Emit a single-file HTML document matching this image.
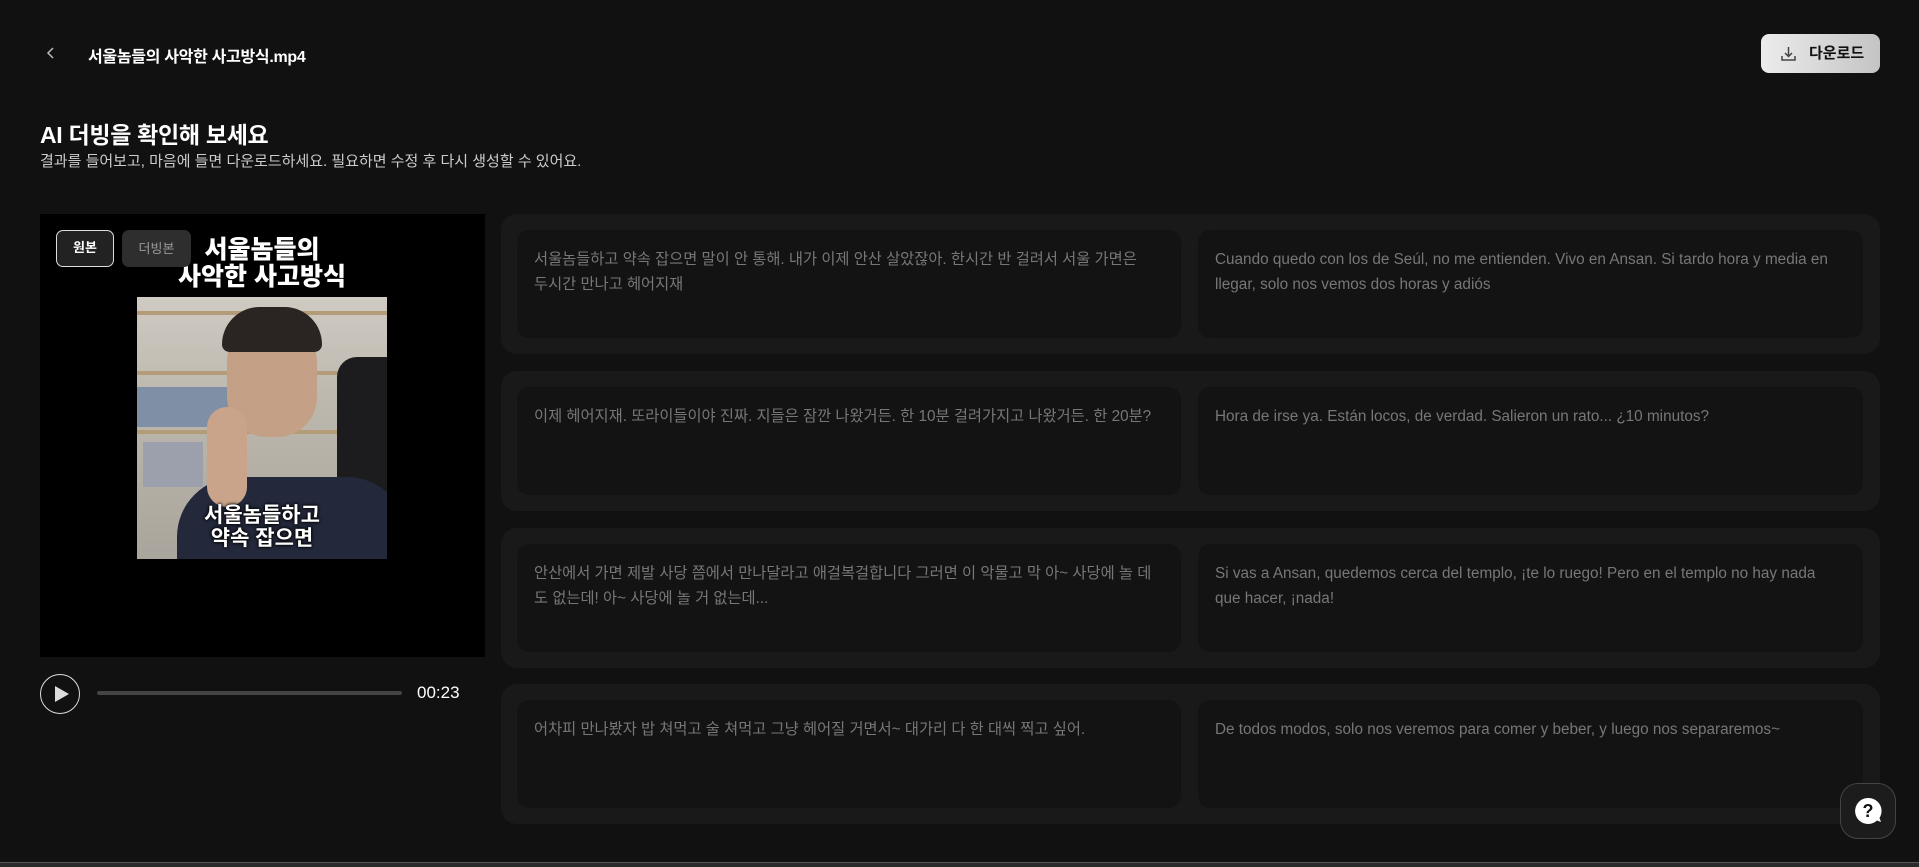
<!DOCTYPE html>
<html><head><meta charset="utf-8"><style>
*{box-sizing:border-box;margin:0;padding:0}
body{width:1919px;height:867px;background:#111;position:relative;overflow:hidden;font-family:"Liberation Sans","Noto Sans CJK KR",sans-serif;color:#fff}
.a{position:absolute}
.row{position:absolute;left:501px;width:1379px;height:140px;background:#191919;border-radius:16px}
.card{position:absolute;top:16px;height:108px;background:#131313;border-radius:12px;padding:18px 28px 18px 17px;font-size:15.3px;line-height:24.5px;color:#777}
.c1{left:16px;width:664px}.c2{left:697px;width:665px}
</style></head><body>
<svg class="a" style="left:45px;top:46px" width="12" height="14" viewBox="0 0 12 14"><path d="M8 2L3 7l5 5" stroke="#bbb" stroke-width="1.5" fill="none"/></svg>
<div class="a" style="left:88px;top:43px;font-size:16px;font-weight:bold;letter-spacing:-0.3px">서울놈들의 사악한 사고방식.mp4</div>
<div class="a" style="left:1761px;top:34px;width:119px;height:39px;border-radius:8px;background:linear-gradient(90deg,#ececec,#c4c4c4);color:#111;font-size:15px;font-weight:bold;line-height:39px;padding-left:48px">다운로드</div>
<svg class="a" style="left:1780px;top:45px" width="17" height="17" viewBox="0 0 17 17"><path d="M8.5 2v9M5 8l3.5 3.5L12 8M2 11v4h13v-4" stroke="#444" stroke-width="1.5" fill="none"/></svg>
<div class="a" style="left:40px;top:116px;font-size:23px;font-weight:bold;letter-spacing:-0.3px">AI 더빙을 확인해 보세요</div>
<div class="a" style="left:40px;top:150px;font-size:15px;color:#ccc">결과를 들어보고, 마음에 들면 다운로드하세요. 필요하면 수정 후 다시 생성할 수 있어요.</div>
<div class="a" style="left:40px;top:214px;width:445px;height:443px;background:#000"></div>
<div class="a" style="left:137px;top:297px;width:250px;height:262px;background:linear-gradient(180deg,#cfcac2 0%,#bdb8ae 40%,#aaa59c 100%);overflow:hidden">
 <div class="a" style="left:0;top:14px;width:250px;height:4px;background:#b49c78"></div>
 <div class="a" style="left:0;top:74px;width:250px;height:4px;background:#b49c78"></div>
 <div class="a" style="left:0;top:133px;width:250px;height:4px;background:#b49c78"></div>
 <div class="a" style="left:0;top:90px;width:110px;height:40px;background:#7f8fa6"></div>
 <div class="a" style="left:6px;top:145px;width:60px;height:45px;background:#9ca0ac"></div>
 <div class="a" style="left:200px;top:60px;width:60px;height:210px;background:#1c1c1e;border-radius:20px 0 0 0"></div>
 <div class="a" style="left:40px;top:180px;width:230px;height:120px;background:#23283a;border-radius:60px 60px 0 0"></div>
 <div class="a" style="left:90px;top:20px;width:90px;height:120px;background:#c4a086;border-radius:45px 45px 40px 40px"></div>
 <div class="a" style="left:85px;top:10px;width:100px;height:45px;background:#2a2422;border-radius:50px 50px 10px 10px"></div>
 <div class="a" style="left:70px;top:110px;width:40px;height:100px;background:#c9a48a;border-radius:20px"></div>
</div>
<div class="a" style="left:137px;top:237px;width:250px;text-align:center;font-size:25px;font-weight:900;line-height:27px;text-shadow:0 0 2px #000">서울놈들의<br>사악한 사고방식</div>
<div class="a" style="left:137px;top:504px;width:250px;text-align:center;font-size:21px;font-weight:bold;line-height:23px;text-shadow:0 0 3px #000,0 0 3px #000">서울놈들하고<br>약속 잡으면</div>
<div class="a" style="left:56px;top:230px;width:58px;height:37px;border:1.5px solid #ddd;border-radius:7px;background:#222;font-size:13px;line-height:34px;text-align:center;font-weight:bold">원본</div>
<div class="a" style="left:122px;top:230px;width:69px;height:37px;border-radius:7px;background:#2e2e2e;font-size:13px;line-height:37px;text-align:center;color:#999">더빙본</div>
<div class="a" style="left:40px;top:674px;width:40px;height:40px;border:1.5px solid #ddd;border-radius:50%"></div>
<svg class="a" style="left:53px;top:684px" width="18" height="20" viewBox="0 0 18 20"><path d="M2 2L16 10 2 18z" fill="#ddd"/></svg>
<div class="a" style="left:97px;top:691px;width:305px;height:4px;background:#444;border-radius:2px"></div>
<div class="a" style="left:417px;top:683px;font-size:17px">00:23</div>
<div class="row" style="top:214px"><div class="card c1">서울놈들하고 약속 잡으면 말이 안 통해. 내가 이제 안산 살았잖아. 한시간 반 걸려서 서울 가면은 두시간 만나고 헤어지재</div><div class="card c2">Cuando quedo con los de Seúl, no me entienden. Vivo en Ansan. Si tardo hora y media en llegar, solo nos vemos dos horas y adiós</div></div>
<div class="row" style="top:371px"><div class="card c1">이제 헤어지재. 또라이들이야 진짜. 지들은 잠깐 나왔거든. 한 10분 걸려가지고 나왔거든. 한 20분?</div><div class="card c2">Hora de irse ya. Están locos, de verdad. Salieron un rato... ¿10 minutos?</div></div>
<div class="row" style="top:528px"><div class="card c1">안산에서 가면 제발 사당 쯤에서 만나달라고 애걸복걸합니다 그러면 이 악물고 막 아~ 사당에 놀 데도 없는데! 아~ 사당에 놀 거 없는데...</div><div class="card c2">Si vas a Ansan, quedemos cerca del templo, ¡te lo ruego! Pero en el templo no hay nada que hacer, ¡nada!</div></div>
<div class="row" style="top:684px"><div class="card c1">어차피 만나봤자 밥 쳐먹고 술 쳐먹고 그냥 헤어질 거면서~ 대가리 다 한 대씩 찍고 싶어.</div><div class="card c2">De todos modos, solo nos veremos para comer y beber, y luego nos separaremos~</div></div>
<div class="a" style="left:1840px;top:783px;width:56px;height:56px;border-radius:18px;background:#1c1c1c;border:1px solid #444"></div>
<svg class="a" style="left:1852px;top:795px" width="32" height="32" viewBox="0 0 32 32"><path d="M16 3a13 13 0 1 0 9 22.5l4 1.5-1.5-4A13 13 0 0 0 16 3z" fill="#fff"/><text x="16" y="22" text-anchor="middle" font-family="Liberation Sans" font-weight="bold" font-size="18" fill="#111">?</text></svg>
<div class="a" style="left:0;top:862px;width:1919px;height:5px;background:#2a2a2a;border-top:1px solid #555"></div>
</body></html>
